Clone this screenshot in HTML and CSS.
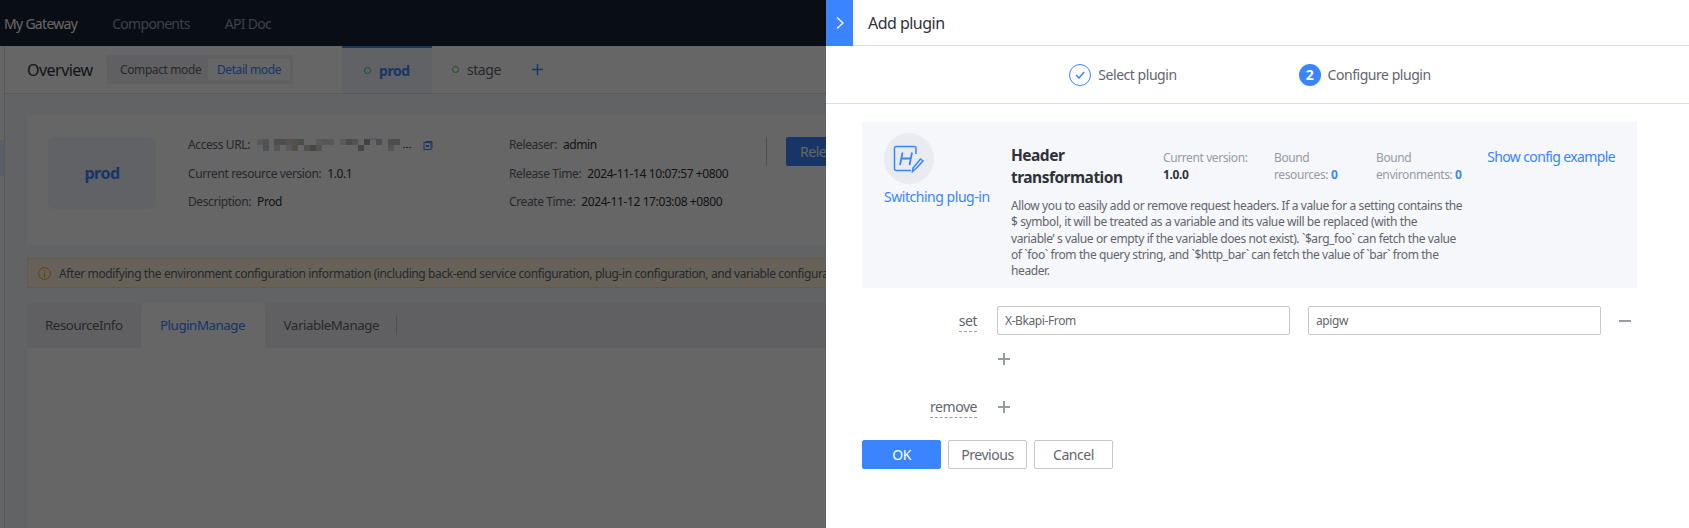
FILE: index.html
```html
<!DOCTYPE html>
<html lang="en">
<head>
    <meta charset="UTF-8">
    <meta name="viewport" content="width=device-width, initial-scale=1.0">
    <title>Add plugin</title>
    <link rel="stylesheet" href="styles.css">
</head>
<body>
    <div class="page">
        <nav class="topnav">
            <a class="nav-item nav-item-active">My Gateway</a>
            <a class="nav-item">Components</a>
            <a class="nav-item">API Doc</a>
        </nav>
        <div class="layout">
            <aside class="sidebar"><div class="sidebar-active"></div></aside>
            <main class="main">
                <div class="subheader">
                    <span class="subheader-title">Overview</span>
                    <div class="mode-toggle">
                        <span class="mode-item">Compact mode</span>
                        <span class="mode-item mode-item-active">Detail mode</span>
                    </div>
                    <div class="env-tab env-tab-active"><i class="env-dot"></i>prod</div>
                    <div class="env-tab"><i class="env-dot"></i>stage</div>
                    <svg class="env-add" width="11" height="11" viewBox="0 0 11 11" stroke="#3a84ff" stroke-width="1.5"><path d="M5.5 0v11M0 5.5h11"/></svg>
                </div>
                <div class="content">
                    <section class="env-card">
                        <div class="env-badge">prod</div>
                        <div class="env-info env-info-left">
                            <div class="info-row"><span class="info-label">Access URL:</span>
                                <svg class="mosaic" width="156" height="14" viewBox="0 0 156 14">
                                    <rect x="0" y="1" width="6" height="6" fill="#dcdcdc"/><rect x="6" y="1" width="6" height="6" fill="#c8d0d4"/><rect x="17" y="1" width="12" height="6" fill="#c0c0c0"/>
                                    <rect x="29" y="1" width="6" height="6" fill="#d4d0bc"/><rect x="35" y="1" width="6" height="6" fill="#cdcdb8"/><rect x="41" y="1" width="6" height="6" fill="#b8c4bc"/>
                                    <rect x="59" y="1" width="6" height="6" fill="#e0e0e0"/><rect x="65" y="1" width="12" height="6" fill="#dadada"/><rect x="83" y="1" width="6" height="6" fill="#e0e0e0"/>
                                    <rect x="89" y="1" width="6" height="6" fill="#bdb8bd"/><rect x="95" y="1" width="6" height="6" fill="#d0d0d0"/><rect x="107" y="1" width="6" height="6" fill="#a8a4b0"/>
                                    <rect x="119" y="1" width="6" height="6" fill="#bcc4c8"/><rect x="131" y="1" width="12" height="6" fill="#c0c0c0"/><rect x="113" y="0" width="6" height="2" fill="#e0e0e0"/>
                                    <rect x="6" y="7" width="6" height="6" fill="#c0ccd4"/><rect x="17" y="7" width="6" height="6" fill="#d4d4d4"/><rect x="29" y="7" width="6" height="6" fill="#e0e0e0"/>
                                    <rect x="35" y="7" width="6" height="6" fill="#cfcbb0"/><rect x="47" y="7" width="6" height="6" fill="#c8c8c0"/><rect x="53" y="7" width="6" height="6" fill="#b4b0ac"/>
                                    <rect x="59" y="7" width="6" height="6" fill="#cfcfcf"/><rect x="101" y="7" width="6" height="6" fill="#b0b0b0"/><rect x="131" y="7" width="6" height="6" fill="#cfd8d0"/>
                                    <rect x="146" y="9" width="2" height="1" fill="#63656e"/><rect x="149" y="9" width="2" height="1" fill="#63656e"/><rect x="152" y="9" width="2" height="1" fill="#63656e"/>
                                </svg>
                                <svg class="copy-icon" width="10" height="10" viewBox="0 0 10 10" fill="none" stroke="#3a84ff"><path d="M2.5 1.5H9V8"/><rect x="1" y="2.5" width="7" height="7"/><rect x="3" y="5" width="3" height="2" fill="#3a84ff" stroke="none"/></svg>
                            </div>
                            <div class="info-row"><span class="info-label">Current resource version:</span><span class="info-value">1.0.1</span></div>
                            <div class="info-row"><span class="info-label">Description:</span><span class="info-value">Prod</span></div>
                        </div>
                        <div class="env-info env-info-right">
                            <div class="info-row"><span class="info-label">Releaser:</span><span class="info-value">admin</span></div>
                            <div class="info-row"><span class="info-label">Release Time:</span><span class="info-value">2024-11-14 10:07:57 +0800</span></div>
                            <div class="info-row"><span class="info-label">Create Time:</span><span class="info-value">2024-11-12 17:03:08 +0800</span></div>
                        </div>
                        <div class="env-action"><button class="release-btn">Release</button></div>
                    </section>
                    <div class="alert">
                        <svg class="alert-icon" width="13" height="13" viewBox="0 0 13 13" fill="none" stroke="#ff9c01"><circle cx="6.5" cy="6.5" r="5.9"/><path d="M6.5 3v1.2M6.5 5.5v4.5" stroke-width="1.2"/></svg>
                        <span>After modifying the environment configuration information (including back-end service configuration, plug-in configuration, and variable configuration</span>
                    </div>
                    <div class="tabs">
                        <span class="tab">ResourceInfo</span>
                        <span class="tab tab-active">PluginManage</span>
                        <span class="tab tab-last">VariableManage</span>
                    </div>
                    <div class="tab-panel"></div>
                </div>
            </main>
        </div>
        <div class="mask"></div>

        <div class="drawer">
            <header class="drawer-header">
                <div class="drawer-close">
                    <svg width="10" height="14" viewBox="0 0 10 14" fill="none" stroke="#fff" stroke-width="1.2"><path d="M2 1.5L8 7L2 12.5"/></svg>
                </div>
                <span class="drawer-title">Add plugin</span>
            </header>
            <div class="steps">
                <div class="step">
                    <span class="step-circle step-done">
                        <svg width="10" height="8" viewBox="0 0 10 8" fill="none" stroke="#3a84ff" stroke-width="1.5"><path d="M1 4L4 7L9 1"/></svg>
                    </span>
                    Select plugin
                </div>
                <div class="step">
                    <span class="step-circle step-current">2</span>
                    Configure plugin
                </div>
            </div>
            <div class="drawer-body">
                <section class="plugin-info">
                    <div class="plugin-switch">
                        <div class="plugin-logo">
                            <svg width="32" height="28" viewBox="0 0 32 28" fill="none" stroke="#3a84ff" stroke-width="1.5">
                                <path d="M23 9V3a1.5 1.5 0 0 0-1.5-1.5H3A1.5 1.5 0 0 0 1.5 3v21A1.5 1.5 0 0 0 3 25.5h15"/>
                                <path d="M9.5 7.5L7 20M19 7.5L16.5 20M8.5 13.5h9.5" stroke-width="1.8"/>
                                <path d="M22 24.5l-2.500 2 .5-3.5 7.5-9 2.500 2z"/>
                            </svg>
                        </div>
                        <a class="link">Switching plug-in</a>
                    </div>
                    <div class="plugin-main">
                        <div class="plugin-top">
                            <h2 class="plugin-name">Header transformation</h2>
                            <div class="plugin-stat stat-version">Current version:<br><b class="stat-dark">1.0.0</b></div>
                            <div class="plugin-stat stat-res">Bound<br>resources: <b class="stat-blue">0</b></div>
                            <div class="plugin-stat stat-env">Bound<br>environments: <b class="stat-blue">0</b></div>
                            <a class="link config-link">Show config example</a>
                        </div>
                        <p class="plugin-desc">Allow you to easily add or remove request headers. If a value for a setting contains the $ symbol, it will be treated as a variable and its value will be replaced (with the variable’ s value or empty if the variable does not exist). `$arg_foo` can fetch the value of `foo` from the query string, and `$http_bar` can fetch the value of `bar` from the header.</p>
                    </div>
                </section>
                <form class="plugin-form">
                    <div class="form-row">
                        <label class="form-label"><span class="dashed">set</span></label>
                        <input class="form-input" type="text" value="X-Bkapi-From">
                        <input class="form-input" type="text" value="apigw">
                        <span class="minus-icon"></span>
                    </div>
                    <div class="form-row add-row"><span class="form-label"></span><span class="plus-icon"></span></div>
                    <div class="form-row remove-row">
                        <label class="form-label"><span class="dashed">remove</span></label>
                        <span class="plus-icon"></span>
                    </div>
                    <div class="form-actions">
                        <button type="button" class="btn btn-primary">OK</button>
                        <button type="button" class="btn">Previous</button>
                        <button type="button" class="btn">Cancel</button>
                    </div>
                </form>
            </div>
        </div>
    </div>
</body>
</html>
```

FILE: styles.css
```css
* {
    box-sizing: border-box;
    letter-spacing: -0.033em;
}

body {
    margin: 0;
    font-family: "Noto Sans", "Noto Sans CJK SC", sans-serif;
    font-size: 12px;
    color: #63656e;
    background-color: #f5f7fa;
}

.page {
    position: relative;
    width: 1689px;
    height: 528px;
    overflow: hidden;
}

.topnav {
    display: flex;
    align-items: center;
    height: 46px;
    padding-left: 4px;
    gap: 35px;
    background-color: #182132;
}

.nav-item {
    font-size: 14px;
    letter-spacing: -0.05em;
    color: #96a2b9;
}

.nav-item-active {
    color: #fff;
}

.layout {
    display: flex;
    height: 482px;
}

.sidebar {
    width: 5px;
    padding-top: 94px;
    background-color: #fff;
    border-right: 1px solid #dcdee5;
}

.sidebar-active {
    height: 36px;
    background-color: #e1ecff;
}

.main {
    flex: 1;
    min-width: 0;
}

.subheader {
    display: flex;
    align-items: center;
    height: 48px;
    padding-left: 22px;
    background-color: #fff;
    border-bottom: 1px solid #dcdee5;
}

.subheader-title {
    width: 80px;
    font-size: 16px;
    color: #313238;
}

.mode-toggle {
    display: flex;
    align-items: center;
    justify-content: space-between;
    width: 186px;
    height: 29px;
    padding: 0 3px 0 13px;
    white-space: nowrap;
    background-color: #f0f1f5;
    border-radius: 2px;
}

.mode-item {
    color: #63656e;
}

.mode-item-active {
    width: 82px;
    height: 21px;
    line-height: 21px;
    text-align: center;
    background-color: #fff;
    color: #3a84ff;
    border-radius: 2px;
}

.env-tab {
    display: flex;
    align-items: center;
    gap: 8px;
    height: 47px;
    font-size: 14px;
}

.env-tab-active {
    width: 90px;
    margin-left: 49px;
    padding-left: 22px;
    font-weight: 700;
    color: #3a84ff;
    background-color: #f0f5ff;
    border-top: 2px solid #3a84ff;
}

.env-tab-active + .env-tab {
    margin-left: 20px;
}

.env-dot {
    width: 7px;
    height: 7px;
    border: 1.5px solid #3fc06d;
    border-radius: 50%;
}

.env-add {
    margin-left: 31px;
}

.content {
    padding: 21px 0 0 22px;
}

.env-card {
    display: flex;
    height: 130px;
    padding: 22px 0 0 21px;
    background-color: #fff;
}

.env-badge {
    width: 108px;
    height: 72px;
    line-height: 72px;
    text-align: center;
    font-size: 16px;
    font-weight: 700;
    color: #3a84ff;
    background-color: #f0f5ff;
    border-radius: 6px;
}

.env-info {
    display: flex;
    flex-direction: column;
    gap: 11.5px;
    margin-top: -1px;
}

.env-info-left {
    width: 321px;
    margin-left: 32px;
}

.info-row {
    display: flex;
    align-items: center;
    height: 17px;
    white-space: nowrap;
}

.info-label {
    margin-right: 6px;
    color: #63656e;
}

.info-value {
    color: #313238;
}

.mosaic {
    margin-left: 1px;
}

.copy-icon {
    margin-left: 10px;
}

.env-info-right {
    width: 257px;
}

.env-action {
    height: 29px;
    padding-left: 19px;
    border-left: 1px solid #c4c6cc;
}

.release-btn {
    width: 90px;
    height: 29px;
    padding: 0 0 0 14px;
    text-align: left;
    font-family: inherit;
    font-size: 14px;
    color: #fff;
    background-color: #3a84ff;
    border: 0;
    border-radius: 2px;
}

.alert {
    display: flex;
    align-items: center;
    gap: 8px;
    height: 30px;
    margin-top: 13px;
    padding-left: 10px;
    white-space: nowrap;
    color: #63656e;
    background-color: #fff4e2;
    border: 1px solid #ffdfac;
}

.alert-icon {
    flex: none;
}

.tabs {
    display: flex;
    height: 45px;
    margin-top: 15px;
    background-color: #f0f1f5;
}

.tab {
    padding: 0 18px;
    font-size: 13.3px;
    line-height: 45px;
    color: #63656e;
}

.tab-active {
    width: 124px;
    text-align: center;
    padding: 0;
    color: #3a84ff;
    background-color: #fff;
    border-radius: 2px 2px 0 0;
}

.tab-last {
    position: relative;
    padding-left: 19px;
}

.tab-last::after {
    content: "";
    position: absolute;
    right: 0;
    top: 12px;
    height: 20px;
    border-right: 1px solid #c4c6cc;
}

.tab-panel {
    height: 180px;
    background-color: #fff;
}

.mask {
    position: absolute;
    inset: 0;
    background-color: rgba(0, 0, 0, 0.6);
}

.drawer {
    position: absolute;
    top: 0;
    right: 0;
    bottom: 0;
    width: 863px;
    background-color: #fff;
}

.drawer-header {
    display: flex;
    align-items: center;
    height: 46px;
    border-bottom: 1px solid #dcdee5;
}

.drawer-close {
    display: flex;
    align-items: center;
    justify-content: center;
    width: 27px;
    height: 46px;
    background-color: #3a84ff;
}

.drawer-title {
    margin-left: 15px;
    font-size: 16px;
    color: #313238;
}

.steps {
    display: flex;
    justify-content: center;
    align-items: center;
    gap: 122px;
    height: 58px;
    padding-right: 15px;
    border-bottom: 1px solid #dcdee5;
}

.step {
    display: flex;
    align-items: center;
    gap: 7px;
    font-size: 14px;
    color: #63656e;
}

.step-circle {
    display: flex;
    align-items: center;
    justify-content: center;
    width: 22px;
    height: 22px;
    border-radius: 50%;
}

.step-done {
    border: 1px solid #3a84ff;
}

.step-current {
    color: #fff;
    font-weight: 700;
    background-color: #3a84ff;
}

.drawer-body {
    padding: 18px 52px 0 36px;
}

.plugin-info {
    display: flex;
    height: 166px;
    padding: 11px 22px 0 22px;
    background-color: #f5f7fa;
}

.plugin-switch {
    width: 127px;
    flex: none;
}

.plugin-logo {
    display: flex;
    align-items: center;
    justify-content: center;
    width: 50px;
    height: 51px;
    background-color: #eaebf0;
    border-radius: 50%;
}

.link {
    font-size: 14px;
    color: #3a84ff;
}

.plugin-switch .link {
    display: block;
    margin-top: 3px;
    white-space: nowrap;
}

.plugin-main {
    flex: 1;
    min-width: 0;
}

.plugin-top {
    display: flex;
    height: 60px;
}

.plugin-name {
    width: 152px;
    margin: 11px 0 0;
    font-size: 15.5px;
    line-height: 22px;
    font-weight: 700;
    color: #313238;
}

.plugin-stat {
    margin-top: 16px;
    line-height: 17px;
    color: #979ba5;
}

.plugin-stat b {
    font-weight: 700;
}

.stat-version {
    width: 111px;
}

.stat-res {
    width: 102px;
}

.stat-env {
    width: 111px;
}

.stat-dark {
    color: #313238;
}

.stat-blue {
    color: #3a84ff;
}

.config-link {
    margin-top: 14px;
    margin-left: auto;
    letter-spacing: -0.045em;
    white-space: nowrap;
}

.plugin-desc {
    width: 452px;
    margin: 5px 0 0;
    line-height: 16.3px;
    color: #63656e;
}

.plugin-form {
    padding-top: 18px;
}

.form-row {
    display: flex;
    align-items: center;
    gap: 18px;
}

.form-label {
    width: 115px;
    margin-right: 2px;
    text-align: right;
    font-size: 14px;
    color: #63656e;
}

.dashed {
    padding-bottom: 1px;
    border-bottom: 1px dashed #979ba5;
}

.form-input {
    width: 293px;
    height: 29px;
    padding: 0 7px;
    font-family: inherit;
    font-size: 12px;
    color: #63656e;
    border: 1px solid #c4c6cc;
    border-radius: 2px;
}

.minus-icon {
    width: 12px;
    height: 2px;
    background-color: #979ba5;
}

.plus-icon {
    position: relative;
    width: 12px;
    height: 12px;
    margin-left: 1px;
}

.plus-icon::before,
.plus-icon::after {
    content: "";
    position: absolute;
    background-color: #979ba5;
}

.plus-icon::before {
    left: 0;
    right: 0;
    top: 5px;
    height: 2px;
}

.plus-icon::after {
    top: 0;
    bottom: 0;
    left: 5px;
    width: 2px;
}

.add-row {
    margin-top: 18px;
}

.remove-row {
    margin-top: 32px;
}

.form-actions {
    display: flex;
    gap: 7px;
    margin-top: 24px;
}

.btn {
    width: 79px;
    height: 29px;
    padding: 0;
    font-family: inherit;
    font-size: 14px;
    color: #63656e;
    background-color: #fff;
    border: 1px solid #c4c6cc;
    border-radius: 2px;
}

.btn-primary {
    color: #fff;
    background-color: #3a84ff;
    border-color: #3a84ff;
}
```
